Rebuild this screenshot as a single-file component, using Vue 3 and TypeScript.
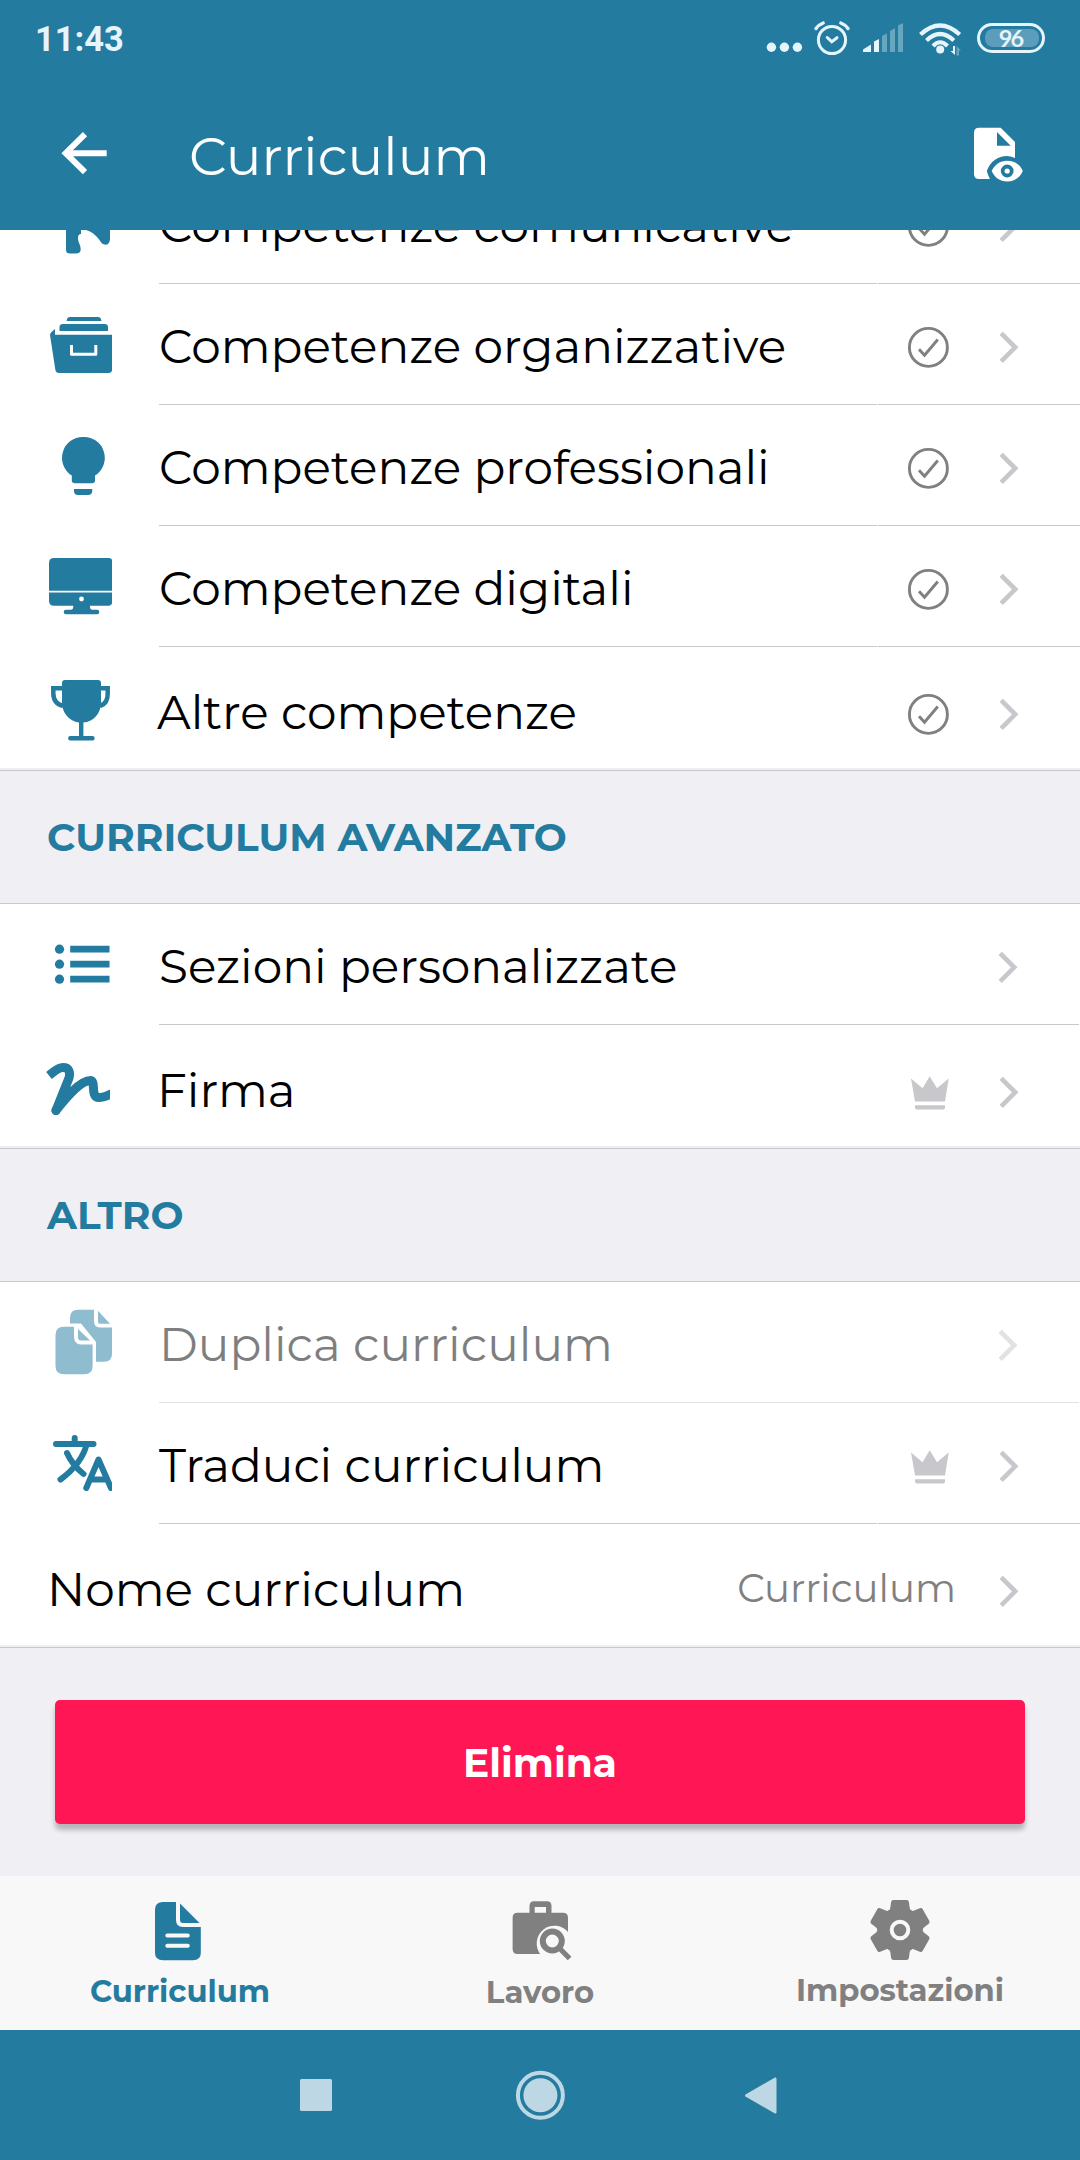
<script setup lang="ts">
type Trailing = 'check' | 'crown' | 'none'

interface Row {
  icon: string
  label: string
  trailing: Trailing
  disabled?: boolean
  value?: string
}

interface Section {
  title: string
  rows: Row[]
}

const sections: Section[] = [
  {
    title: '',
    rows: [
      { icon: 'megaphone', label: 'Competenze comunicative', trailing: 'check' },
      { icon: 'drawer', label: 'Competenze organizzative', trailing: 'check' },
      { icon: 'bulb', label: 'Competenze professionali', trailing: 'check' },
      { icon: 'monitor', label: 'Competenze digitali', trailing: 'check' },
      { icon: 'trophy', label: 'Altre competenze', trailing: 'check' },
    ],
  },
  {
    title: 'CURRICULUM AVANZATO',
    rows: [
      { icon: 'list', label: 'Sezioni personalizzate', trailing: 'none' },
      { icon: 'signature', label: 'Firma', trailing: 'crown' },
    ],
  },
  {
    title: 'ALTRO',
    rows: [
      { icon: 'copy', label: 'Duplica curriculum', trailing: 'none', disabled: true },
      { icon: 'translate', label: 'Traduci curriculum', trailing: 'crown' },
      { icon: '', label: 'Nome curriculum', trailing: 'none', value: 'Curriculum' },
    ],
  },
]
</script>

<template>
  <div class="screen">
    <header class="top">
      <div class="status">
        <span class="clock">11:43</span>
        <svg class="signals" width="200" height="72" viewBox="765 0 200 72">
          <g fill="#e6f4fc">
            <circle cx="771.4" cy="47.3" r="4.7" />
            <circle cx="784.4" cy="47.3" r="4.7" />
            <circle cx="797.4" cy="47.3" r="4.7" />
            <path d="M863 52V49.500L871 44.500V52ZM874 52V41.500L879 39V52Z" />
            <circle cx="940.2" cy="49.5" r="4" />
          </g>
          <path fill="#68a5bf" d="M882 52V36L887 33.300V52ZM890 52V31L895 28V52ZM898 52V25.500L903 23V52Z" />
          <g fill="none" stroke="#e6f4fc" stroke-width="3">
            <circle cx="832" cy="40" r="13.600" />
            <path stroke-linecap="round" d="M827.200 37.500 831.800 41.700 837 37.700" />
            <path stroke-width="3.400" stroke-linecap="round" d="M816 28.500Q818.500 24.800 823.200 23M848 28.500Q845.500 24.800 840.800 23" />
            <path stroke-width="4.200" d="M920.500 34.500Q940 16.500 959.700 34.500M926.500 40.500Q940 27.500 953.800 40.500M933 46Q940 38.500 947.500 46" />
          </g>
          <path fill="#e6f4fc" d="M953 46H955V55L950.500 51H953Z" />
          <path fill="#68a5bf" d="M956.500 46L961 50.500H959V55.500H956.500Z" />
        </svg>
        <div class="battery"><div class="charge">96</div></div>
      </div>
      <div class="appbar">
        <svg width="189" height="158" viewBox="0 72 189 158">
          <path fill="none" stroke="#fff" stroke-width="6" d="M106.700 153.200H67M85 134.200 65.700 153.200 85 172.200" />
        </svg>
        <h1 class="title">Curriculum</h1>
        <svg class="preview" width="120" height="158" viewBox="960 72 120 158">
          <path fill="#fff" fill-rule="evenodd" d="M979 127.700H1000.700L1015 142V179H979Q974 179 974 174V132.700Q974 127.700 979 127.700ZM997 132V145.700H1010.700Z" />
          <path fill="#247ba0" d="M986.800 171C990 161.500 998 156 1007 156Q1012 156 1016 158.500H1030V186H995C991 182 988.500 177 986.800 171Z" />
          <path fill="#fff" d="M991.700 171C994.500 164.500 1000 160.700 1007.200 160.700S1020 164.500 1022.800 171C1020 177.500 1014.500 181.400 1007.200 181.400S994.500 177.500 991.700 171Z" />
          <circle cx="1007.200" cy="171" r="4.500" fill="#fff" stroke="#247ba0" stroke-width="3.800" />
        </svg>
      </div>
    </header>

    <main class="content">
      <section v-for="(section, i) in sections" :key="i" class="section">
        <h2 v-if="section.title" class="heading">{{ section.title }}</h2>
        <div
          v-for="(row, j) in section.rows"
          :key="row.label"
          class="row"
          :class="{ last: j === section.rows.length - 1, disabled: row.disabled, plain: row.trailing === 'none' }"
        >
          <svg v-if="row.icon" class="icon" width="112" height="120" viewBox="0 0 112 120">
            <g v-if="row.icon === 'megaphone'">
              <path d="M66 50H80L81 67 81 71Q78 71 78 75C78 80 81 82 80.700 87Q80 90.500 76 90.500H70Q66 90.500 66 87ZM84 60 86 67C94 69 98 75 102 80.500Q105 82.500 108 81 110 79 110 76V50H84Z" />
            </g>
            <g v-else-if="row.icon === 'drawer'">
              <path d="M66.500 37Q67 33 70 33H98Q101 33 101.500 37ZM59.500 47V43Q59.500 40 63 40H104.500Q108 40 108 43V47Z" />
              <path d="M50 51Q50 49 52 47.500L55 45V50.700H112.200V85Q112.200 89 108.500 89H59Q55.800 89 55.300 85.500Z" />
              <path class="hollow" stroke-width="3" stroke-linejoin="round" d="M71.500 61V70.300H95.800V61" />
            </g>
            <g v-else-if="row.icon === 'bulb'">
              <path d="M83.400 32A20.500 20.800 0 0 1 95 70.500V75.500Q95 78.200 92 78.200H75Q71.800 78.200 71.800 75.500V70.500A20.500 20.800 0 0 1 83.400 32ZM74 84H92.200V86Q92.200 90 88 90H78Q74 90 74 86Z" />
            </g>
            <g v-else-if="row.icon === 'monitor'">
              <path d="M54 32H109Q112.200 32 112.200 35V76Q112.200 79.700 109 79.700H90V81Q90 83.700 92 83.700H97A2.300 2.300 0 0 1 97 88.300H66A2.300 2.300 0 0 1 66 83.700H71Q73.200 83.700 73.200 81V79.700H54Q49 79.700 49 74.700V37Q49 32 54 32Z" />
              <path class="hollow" stroke-width="1.700" d="M49 65.700H112.500" />
              <circle class="hole" cx="81.500" cy="73" r="2.400" />
            </g>
            <g v-else-if="row.icon === 'trophy'">
              <path d="M65 33H98Q101 33 101 36V55C101 67 93 75 83.400 75.500V89H92.500A2.200 2.200 0 0 1 92.500 93.400H70.300A2.200 2.200 0 0 1 70.300 89H79V75.500C69 74 62 66 62 55V36Q62 33 65 33Z" />
              <path class="line" stroke-width="4.500" d="M63 41.200H53.300V46C53.300 53 57 57.500 63 59M100 41.200H107.700V46C108 53 106 57 100 59" />
            </g>
            <g v-else-if="row.icon === 'list'">
              <circle cx="59.500" cy="45.200" r="4.600" /><circle cx="59.500" cy="60.200" r="4.600" /><circle cx="59.500" cy="75.200" r="4.600" />
              <path d="M70.200 41.800H109.500V48.600H70.200ZM70.200 56.800H109.500V63.600H70.200ZM70.200 71.800H109.500V78.600H70.200Z" />
            </g>
            <svg v-else-if="row.icon === 'signature'" width="110" height="120">
              <path class="line" stroke-width="9" stroke-linejoin="round" d="M49 50.500C54 46.500 58 42.500 63 42.500C69 42.500 70.500 47 69 53L56 85.500C65 74 80 55 91 55.500C96 57 90 72.500 99 72.500C104 73 109 70 116 66.500" />
              <circle cx="56" cy="85.500" r="4.500" />
            </svg>
            <g v-else-if="row.icon === 'copy'">
              <path d="M78 27.700H94V39Q94 45.500 100 45.500H112V72Q112 79.700 104 79.700H96V60L81 41.500H70V36Q70 27.700 78 27.700ZM98 28.800 110 41.800H100Q98 41.800 98 39.500Z" />
              <path d="M64 44.700H74V54Q74 62.500 81 62.500H92.600V84Q92.600 92.300 84.500 92.300H64Q55.500 92.300 55.500 84V53Q55.500 44.700 64 44.700ZM78 47 90 58.500H81Q78 58.500 78 55Z" />
            </g>
            <g v-else-if="row.icon === 'translate'">
              <path class="line" stroke-width="6" stroke-linecap="round" stroke-linejoin="round" d="M56 41H93.500M74.700 35V40M86.500 42C82 58 72 68 60.500 76.500M67 50C71 59 76 65 83.500 71M86.300 85 98.500 56.500 111 85M91 76.500H106" />
            </g>
          </svg>
          <span class="label">{{ row.label }}</span>
          <span class="side">
            <span v-if="row.value" class="value">{{ row.value }}</span>
            <svg class="mark" width="180" height="120" viewBox="900 0 180 120">
              <g v-if="row.trailing === 'check'" fill="none" stroke="#808080" stroke-width="2.900">
                <circle cx="928.400" cy="63.400" r="19" />
                <path d="M919 65.200 924.500 71.200 937.800 55.500" />
              </g>
              <path v-if="row.trailing === 'crown'" fill="#c7c7cc" d="M911 49.500 922.600 59.300 929.700 47.200 937 59.300 948.700 49.500 945 72.400H915ZM915 76.300H945V78.500Q945 80.500 943 80.500H917Q915 80.500 915 78.500Z" />
              <path fill="none" stroke="#c7c7cc" stroke-width="4.600" :transform="row.trailing === 'none' && !row.value ? 'translate(-1 0)' : undefined" d="M1001.200 49.300 1015.200 63.300 1001.200 77.300" />
            </svg>
          </span>
        </div>
      </section>

      <button class="delete">Elimina</button>
    </main>

    <nav class="tabs">
      <a class="tab active">
        <svg width="80" height="84" viewBox="138 1888 80 84">
          <path fill="currentColor" d="M163 1902H176V1920Q176 1927 183 1927H200.800V1953Q200.800 1960.300 193 1960.300H163Q155 1960.300 155 1953V1909.500Q155 1902 163 1902ZM180 1903.500 199.500 1923H183Q180 1923 180 1920Z" />
          <path stroke="#f8f8f8" stroke-width="4" stroke-linecap="round" d="M167.300 1935.400H187.800M167.300 1945.800H187.800" />
        </svg>
        <span>Curriculum</span>
      </a>
      <a class="tab">
        <svg width="80" height="84" viewBox="500 1888 80 84">
          <path fill="currentColor" fill-rule="evenodd" d="M529.500 1912.700V1906Q529.500 1901.300 534 1901.300H547Q551.500 1901.300 551.500 1906V1912.700H563Q568 1912.700 568 1917.700V1954H517.500Q512.600 1954 512.600 1949V1917.700Q512.600 1912.700 517.500 1912.700ZM534.700 1907V1912.700H546V1907Z" />
          <path fill="#f8f8f8" d="M568.500 1932.500A17.800 17.800 0 1 0 540.500 1954.500H569Z" />
          <circle cx="552.300" cy="1941" r="9.500" fill="none" stroke="currentColor" stroke-width="6" />
          <path stroke="currentColor" stroke-width="5.200" d="M558.500 1947.200 569.600 1958.500" />
        </svg>
        <span class="low">Lavoro</span>
      </a>
      <a class="tab">
        <svg width="80" height="84" viewBox="860 1888 80 84">
          <g transform="translate(900 1930)" fill="currentColor">
            <circle r="22.500" />
            <path v-for="n in 6" :key="n" :transform="`rotate(${n * 60})`" d="M-12 -19Q-10 -20-9.700 -22L-8.900 -28Q-8.500 -30-6.500 -30H6.500Q8.500 -30 8.900 -28L9.700 -22Q10 -20 12 -19Z" />
            <circle r="8.300" stroke="#f8f8f8" stroke-width="4" />
          </g>
        </svg>
        <span class="high">Impostazioni</span>
      </a>
    </nav>

    <footer class="sysnav">
      <svg width="1080" height="130" viewBox="0 2030 1080 130">
        <g fill="#bdd8e4">
          <rect x="300" y="2079" width="32" height="32" rx="1.500" />
          <circle cx="540.400" cy="2095.300" r="17" />
          <circle cx="540.400" cy="2095.300" r="22.500" fill="none" stroke="#bdd8e4" stroke-width="4" />
          <path d="M745.500 2094.500 775 2077.500Q776.500 2077 776.500 2079V2112Q776.500 2114 775 2113.500L745.500 2096.500Q744.500 2095.500 745.500 2094.500Z" />
        </g>
      </svg>
    </footer>
  </div>
</template>

<style>
body {
  margin: 0;
}
</style>

<style scoped>
.screen {
  width: 1080px;
  height: 2160px;
  display: flex;
  flex-direction: column;
  overflow: hidden;
  background: #efeff4;
  color: #000;
  font-family: Montserrat, Inter, "Open Sans", sans-serif;
}
svg {
  display: block;
  flex: none;
}
.label,
.value,
.title,
.clock {
  flex: none;
  white-space: nowrap;
}
.top {
  flex: none;
  height: 230px;
  background: #247ba0;
  position: relative;
  z-index: 1;
}
.status {
  display: flex;
  height: 72px;
}
.clock {
  width: 730px;
  padding-left: 35px;
  font: 700 34.5px/78px Roboto, sans-serif;
  color: #e6f4fc;
}
.battery {
  box-sizing: border-box;
  width: 68px;
  height: 30px;
  margin: 23px 0 0 12px;
  border: 3px solid #e6f4fc;
  border-radius: 15px;
  padding: 3px 5px;
}
.charge {
  box-sizing: border-box;
  width: 54px;
  height: 18px;
  padding-right: 3px;
  border-radius: 8px;
  background: #5b9dba;
  font: 700 23.5px/18px Lato, sans-serif;
  letter-spacing: -2px;
  text-align: center;
  color: #e6f4fc;
}
.appbar {
  display: flex;
  height: 158px;
}
.title {
  margin: 0;
  font-size: 53.2px;
  font-weight: 400;
  line-height: 169px;
  color: #fff;
}
.preview {
  margin-left: auto;
}
.content {
  flex: none;
  height: 1646px;
  display: flex;
  flex-direction: column;
}
.section:first-child {
  margin-top: -67px;
}
.heading {
  box-sizing: border-box;
  height: 133px;
  margin: 0;
  padding-left: 47px;
  border-bottom: 1px solid #c8c7cc;
  font-size: 39.1px;
  font-weight: 700;
  line-height: 133px;
  color: #247ba0;
}
.row {
  display: flex;
  height: 120px;
  background:
    linear-gradient(#c8c7cc, #c8c7cc) 159px 100% / 718px 1px no-repeat,
    linear-gradient(#c8c7cc, #c8c7cc) 878px 100% / 202px 1px no-repeat,
    #fff;
  padding-bottom: 1px;
}
.row.plain {
  background:
    linear-gradient(#c8c7cc, #c8c7cc) 159px 100% / 920px 1px no-repeat,
    #fff;
}
.row.plain.disabled {
  background:
    linear-gradient(#e3e3e5, #e3e3e5) 159px 100% / 920px 1px no-repeat,
    #fff;
}
.row.last,
.row.last.plain {
  height: 121px;
  padding-bottom: 2px;
  border-bottom: 1px solid #c8c7cc;
  background: #fff;
  box-shadow: inset 0 -2px #efeff1;
}
.icon {
  fill: #247ba0;
}
.icon .line {
  fill: none;
  stroke: #247ba0;
}
.icon .hollow {
  fill: none;
  stroke: #fff;
}
.icon .hole {
  fill: #fff;
}
.label {
  margin-left: 47px;
  font-size: 47px;
  line-height: 125px;
}
.last .label {
  line-height: 131px;
}
.last .icon + .label {
  margin-left: 45px;
}
.disabled .icon,
.disabled .mark,
.disabled .label {
  opacity: 0.5;
}
.side {
  display: flex;
  margin-left: auto;
}
.last .mark {
  margin-top: 4px;
}
.value {
  margin-right: -56px;
  font-size: 38.7px;
  line-height: 130px;
  color: #808080;
}
.delete {
  width: 970px;
  height: 124px;
  margin: 52px 55px 0;
  padding: 0;
  border: 0;
  border-radius: 5px;
  background: #ff1654;
  box-shadow: 0 6px 5px rgba(0, 0, 0, 0.24);
  font: 700 39.2px/127px Montserrat, Inter, sans-serif;
  color: #fff;
}
.tabs {
  flex: none;
  height: 154px;
  display: flex;
  background: #f8f8f8;
  color: #808080;
}
.tab {
  flex: 1;
  display: flex;
  flex-direction: column;
  align-items: center;
  padding-top: 12px;
  font-size: 30.7px;
  font-weight: 700;
  line-height: 38px;
}
.tab .low {
  line-height: 40px;
}
.tab .high {
  line-height: 36px;
}
.tab.active {
  color: #247ba0;
}
.tab.active svg {
  margin-left: -4px;
}
.sysnav {
  flex: none;
  height: 130px;
  background: #247ba0;
}
</style>
